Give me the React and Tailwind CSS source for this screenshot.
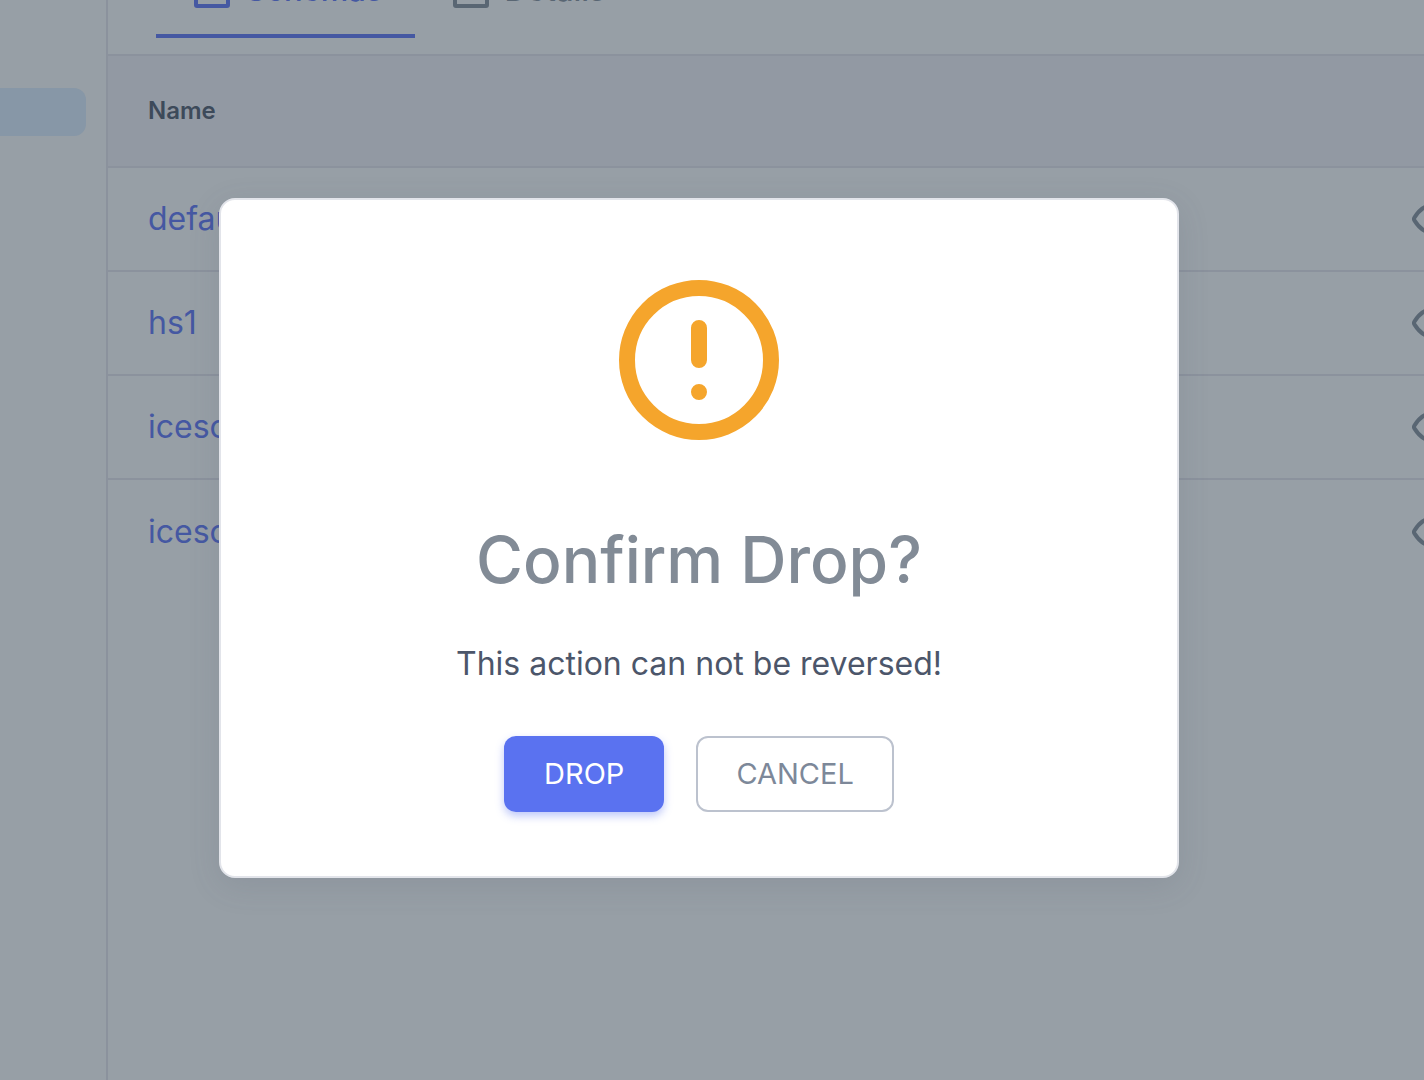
const rows = ["default", "hs1", "icesc1", "icesc2"];

function TableIcon() {
  return (
    <svg viewBox="0 0 24 24" className="size-12 shrink-0" fill="none" stroke="currentColor" strokeWidth="2" strokeLinejoin="round" aria-hidden="true">
      <rect x="4" y="4" width="16" height="16" rx="0.5" />
    </svg>
  );
}

function EyeIcon() {
  return (
    <svg viewBox="0 0 24 24" className="size-12 shrink-0" fill="none" stroke="currentColor" strokeWidth="2" strokeLinecap="round" strokeLinejoin="round" aria-hidden="true">
      <path d="M3.2 12.7a1.3 1.3 0 0 1 0-1.4C5.6 7.4 8.4 5.2 12 5.2s6.4 2.2 8.8 6.1a1.3 1.3 0 0 1 0 1.4c-2.4 3.9-5.2 6.1-8.8 6.1s-6.4-2.2-8.8-6.1z" />
      <circle cx="12" cy="12" r="3" />
    </svg>
  );
}

function Tab({ label, active }) {
  return (
    <button
      role="tab"
      aria-selected={active}
      className={
        active
          ? "flex shrink-0 items-center gap-2.5 border-b-4 border-[#4558a2] px-8 pb-5 text-[#4558a2]"
          : "flex shrink-0 items-center gap-2.5 border-b-4 border-transparent px-8 pb-5 text-[#596673]"
      }
    >
      <TableIcon />
      <span className="text-[31px] leading-12 font-medium">{label}</span>
    </button>
  );
}

export default function App() {
  return (
    <div className="relative flex h-screen overflow-hidden bg-[#979fa6] font-['Inter',sans-serif]">
      <aside className="w-[108px] shrink-0 border-r-2 border-[#8b929d] pt-[88px] pr-5">
        <div className="h-12 rounded-r-xl bg-[#8797a7]" />
      </aside>
      <main className="min-w-0 flex-1 overflow-hidden">
        <div role="tablist" className="flex h-14 items-end overflow-hidden border-b-2 border-[#8b929d] px-12 pb-4">
          <Tab label="Schemas" active />
          <Tab label="Details" active={false} />
        </div>
        <table className="w-full table-fixed border-separate border-spacing-0 text-left">
          <thead>
            <tr className="h-28 bg-[#9299a3]">
              <th className="border-b-2 border-[#8b929d] pl-10 text-2xl font-semibold text-[#3d4a5a]">Name</th>
              <th aria-label="Actions" className="w-4 border-b-2 border-[#8b929d]" />
            </tr>
          </thead>
          <tbody>
            {rows.map((name) => (
              <tr key={name} className="group h-[104px]">
                <td className="border-b-2 border-[#8b929d] pl-10 text-[32px] group-last:border-b-0">
                  <a href="#" className="text-[#4558a2]">{name}</a>
                </td>
                <td className="overflow-hidden border-b-2 border-[#8b929d] group-last:border-b-0">
                  <button aria-label={"View " + name} className="flex text-[#596673]">
                    <EyeIcon />
                  </button>
                </td>
              </tr>
            ))}
          </tbody>
        </table>
      </main>

      <div className="absolute inset-0 flex items-center justify-center pr-[26px] pb-1">
        <div
          role="dialog"
          aria-modal="true"
          aria-labelledby="confirm-title"
          className="flex w-full max-w-[960px] flex-col items-center rounded-2xl border-2 border-[#e2e4ea] bg-white px-10 pt-20 pb-16 shadow-[0_8px_32px_rgba(76,86,106,0.14)]"
        >
          <svg viewBox="0 0 160 160" className="size-40" fill="none" stroke="#f5a52c" strokeWidth="16" strokeLinecap="round" aria-hidden="true">
            <circle cx="80" cy="80" r="72" />
            <path d="M80 48v32M80 112v0" />
          </svg>
          <h2 id="confirm-title" className="mt-20 text-[64px] leading-20 font-medium text-[#828b96]">Confirm Drop?</h2>
          <p className="mt-10 text-[32px] leading-12 text-[#4c566a]">This action can not be reversed!</p>
          <div className="mt-12 flex gap-8">
            <button className="h-[76px] rounded-xl bg-[#5a72f0] px-10 text-[29px] text-white shadow-[0_4px_8px_rgba(90,114,240,0.4)]">DROP</button>
            <button className="h-[76px] rounded-xl border-2 border-[#bcc2ce] px-[38px] text-[29px] text-[#7d8899]">CANCEL</button>
          </div>
        </div>
      </div>
    </div>
  );
}
